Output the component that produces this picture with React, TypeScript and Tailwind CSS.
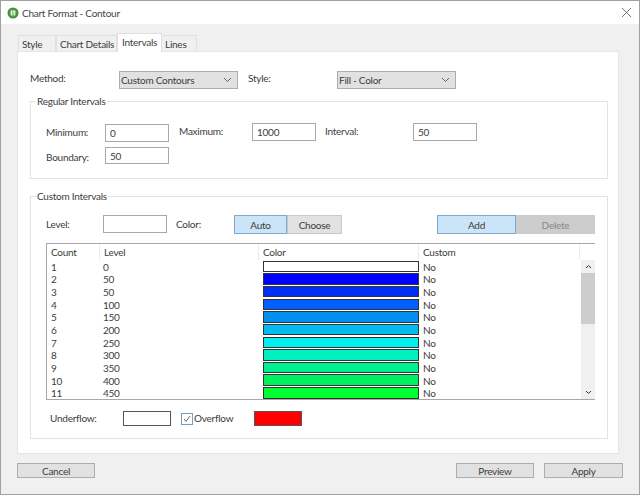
import React from "react";

const rows: [string, string, string][] = [
  ["1", "0", "#ffffff"],
  ["2", "50", "#0000ff"],
  ["3", "50", "#0030f8"],
  ["4", "100", "#0060ff"],
  ["5", "150", "#0090f0"],
  ["6", "200", "#00bcf0"],
  ["7", "250", "#00f0f0"],
  ["8", "300", "#00f0c0"],
  ["9", "350", "#00f090"],
  ["10", "400", "#00f060"],
  ["11", "450", "#00ff30"],
];

function Select({ text }: { text: string }) {
  return (
    <div className="w-[119px] h-[18px] flex items-center justify-between bg-[#e1e1e1] border border-[#adadad] pl-[1px] pr-[5px]">
      <span>{text}</span>
      <svg width="9" height="6" viewBox="0 0 9 6" fill="none" stroke="#555" strokeWidth="0.9">
        <path d="M1 1l3.5 3.5L8 1" />
      </svg>
    </div>
  );
}

function Input({ value, cls }: { value?: string; cls: string }) {
  return (
    <div className={`w-[64px] bg-white border border-[#a8a8a8] pl-[4px] flex items-center ${cls}`}>{value}</div>
  );
}

function Group({ title, cls, children }: { title: string; cls: string; children: React.ReactNode }) {
  return (
    <div className={`relative ml-[12px] w-[578px] border border-[#e3e3e3] ${cls}`}>
      <span className="absolute left-[5px] -top-[9px] bg-white px-[1px] leading-[16px]">{title}</span>
      {children}
    </div>
  );
}

function Tab({ text, cls }: { text: string; cls: string }) {
  return <div className={`h-[16px] bg-[#f0f0f0] border border-b-0 border-[#e0e0e0] pl-[3px] leading-[17px] whitespace-nowrap ${cls}`}>{text}</div>;
}

function ActionButton({ text, cls }: { text: string; cls: string }) {
  return (
    <div className={`h-[15px] bg-[#e1e1e1] border border-[#adadad] flex items-center justify-center ${cls}`}>{text}</div>
  );
}

export default function App() {
  return (
    <div className="w-[640px] h-[495px] border border-[#a0a0a0] bg-[#f0f0f0] overflow-hidden flex flex-col text-[#3c3c3c] text-[10px] tracking-[-0.25px] leading-[12px] font-['Lato',sans-serif]">
      <div className="h-[23px] shrink-0 bg-white flex items-center pl-[6px] pr-[6px]">
        <svg width="12" height="12" viewBox="0 0 12 12">
          <circle cx="6" cy="6" r="5.5" fill="#3f8f3a" />
          <circle cx="6" cy="6" r="3.4" fill="#7cc06c" />
          <path d="M4.6 3.8v4.4M7.2 3.8v4.4M5.8 4.6h1.4" stroke="#fff" strokeWidth="1" fill="none" />
        </svg>
        <span className="ml-[3px] text-[#444]">Chart Format - Contour</span>
        <svg className="ml-auto mr-[1px]" width="11" height="11" viewBox="0 0 11 11" stroke="#555" strokeWidth="0.8">
          <path d="M1 1l9 9M10 1l-9 9" />
        </svg>
      </div>

      <div className="h-[19px] shrink-0 mt-[8px] ml-[17px] flex items-end">
        <Tab text="Style" cls="w-[38px]" />
        <Tab text="Chart Details" cls="w-[61px]" />
        <div className="w-[45px] h-[19px] bg-white border border-b-0 border-[#e0e0e0] pl-[4px] leading-[17px] relative top-[1px] whitespace-nowrap">Intervals</div>
        <Tab text="Lines" cls="w-[36px] -ml-px" />
      </div>

      <div className="ml-[16px] w-[602px] h-[403px] shrink-0 bg-white border border-[#e5e5e5]">
        <div className="mt-[19px] ml-[12px] h-[18px] flex">
          <span className="w-[89px] mt-[1px]">Method:</span>
          <Select text="Custom Contours" />
          <span className="ml-[10px] w-[89px] mt-[1px]">Style:</span>
          <Select text="Fill - Color" />
        </div>

        <Group title="Regular Intervals" cls="mt-[12px] h-[78px]">
          <div className="mt-[21px] pl-[15px] flex items-start h-[19px]">
            <span className="w-[59px] mt-[3px]">Minimum:</span>
            <Input value="0" cls="h-[18px] mt-[1px]" />
            <span className="ml-[10px] w-[73px] mt-[2px]">Maximum:</span>
            <Input value="1000" cls="h-[18px]" />
            <span className="ml-[9px] w-[88px] mt-[2px]">Interval:</span>
            <Input value="50" cls="h-[18px]" />
          </div>
          <div className="mt-[5px] pl-[15px] flex items-start">
            <span className="w-[59px] mt-[4px]">Boundary:</span>
            <Input value="50" cls="h-[17px]" />
          </div>
        </Group>

        <Group title="Custom Intervals" cls="mt-[17px] h-[243px]">
          <div className="mt-[18px] pl-[15px] h-[19px] flex items-start">
            <span className="w-[57px] mt-[3px]">Level:</span>
            <Input cls="h-[18px]" />
            <span className="ml-[9px] w-[58px] mt-[3px]">Color:</span>
            <div className="w-[53px] h-[19px] bg-[#cce4f7] border border-[#7fa8d0] flex items-center justify-center">Auto</div>
            <div className="w-[55px] h-[19px] bg-[#e1e1e1] border border-[#c8c8c8] flex items-center justify-center">Choose</div>
            <div className="ml-[95px] w-[79px] h-[19px] bg-[#cce4f7] border border-[#7fa8d0] flex items-center justify-center">Add</div>
            <div className="w-[79px] h-[19px] bg-[#cccccc] text-[#888] flex items-center justify-center">Delete</div>
          </div>

          <div className="mt-[9px] ml-[15px] w-[549px] h-[157px] border-t border-l border-b border-[#a8a8a8] overflow-hidden">
            <div className="h-[16px] flex items-center">
              <div className="w-[53px] h-[16px] leading-[16px] pl-[4px] border-r border-[#ececec]">Count</div>
              <div className="w-[159px] h-[16px] leading-[16px] pl-[4px] border-r border-[#ececec]">Level</div>
              <div className="w-[160px] h-[16px] leading-[16px] pl-[4px] border-r border-[#ececec]">Color</div>
              <div className="w-[161px] h-[16px] leading-[16px] pl-[4px] border-r border-[#ececec]">Custom</div>
            </div>
            <div className="flex h-[139px]">
              <div className="w-[534px]">
                {rows.map(([count, level, color]) => (
                  <div key={count} className="h-[12.67px] flex items-center leading-[14px]">
                    <div className="w-[56px] pl-[4px] pt-[1px]">{count}</div>
                    <div className="w-[160px] pt-[1px]">{level}</div>
                    <div
                      className="w-[156px] h-[11.5px] border border-[#333] shrink-0"
                      style={{ backgroundColor: color }}
                    />
                    <div className="pl-[4px] pt-[1px]">No</div>
                  </div>
                ))}
              </div>
              <div className="w-[14px] h-[139px] bg-[#f0f0f0] flex flex-col">
                <div className="h-[13px] flex items-center justify-center">
                  <svg width="7" height="5" viewBox="0 0 7 5" fill="none" stroke="#333" strokeWidth="1">
                    <path d="M1 4l2.5-2.5L6 4" />
                  </svg>
                </div>
                <div className="h-[51px] bg-[#cdcdcd]" />
                <div className="mt-auto h-[13px] flex items-center justify-center">
                  <svg width="7" height="5" viewBox="0 0 7 5" fill="none" stroke="#333" strokeWidth="1">
                    <path d="M1 1l2.5 2.5L6 1" />
                  </svg>
                </div>
              </div>
            </div>
          </div>

          <div className="mt-[11px] pl-[19px] h-[15px] flex items-start">
            <span className="w-[73px] leading-[14px]">Underflow:</span>
            <div className="w-[48px] h-[15px] bg-white border border-[#555]" />
            <div className="ml-[10px] mt-[2px] w-[10px] h-[10px] box-content border border-[#7a9cc0] flex items-center justify-center">
              <svg width="8" height="8" viewBox="0 0 8 8" fill="none" stroke="#555" strokeWidth="0.9">
                <path d="M1 4l2 2.4L7 1" />
              </svg>
            </div>
            <span className="ml-[1px] w-[60px] leading-[15px]">Overflow</span>
            <div className="w-[48px] h-[15px] bg-[#ff0000] border border-[#555]" />
          </div>
        </Group>
      </div>

      <div className="mt-[9px] ml-[16px] flex">
        <ActionButton text="Cancel" cls="w-[78px]" />
        <ActionButton text="Preview" cls="w-[78px] ml-[361px]" />
        <ActionButton text="Apply" cls="w-[79px] ml-[10px]" />
      </div>
    </div>
  );
}
